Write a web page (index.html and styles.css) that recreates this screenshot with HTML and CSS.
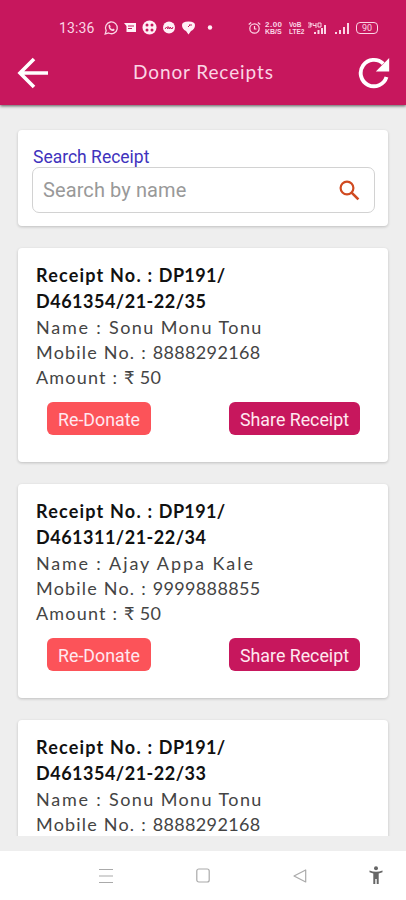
FILE: index.html
```
<!DOCTYPE html>
<html lang="en">
<head>
<meta charset="utf-8">
<title>Donor Receipts</title>
<link rel="stylesheet" href="styles.css">
</head>
<body>
<div class="app">
  <header class="header">
    <div class="status">
      <span class="clock">13:36</span>
      <svg class="left-icons" width="112" height="16" viewBox="0 0 112 16">
        <g fill="none" stroke="#fbd5e5" stroke-width="1.3"><path d="M1.2 14l1-3.4A5.9 5.9 0 1 1 4.6 13z"/></g>
        <path d="M4.6 5l1.2-.3.9 1.8-.6.8q.8 1.4 2.2 2l.8-.7 1.6.9q-.4 1.7-2.1 1.5Q5 10.200 4.600 6.400z" fill="#fbd5e5"/>
        <path d="M20 3h12v9H22.500V6z" fill="#fff0f6"/><path d="M24 6h6M24 8.500h4" stroke="#c7175d"/>
        <circle cx="45.500" cy="7.500" r="7" fill="#fff0f6"/>
        <g fill="#c7175d"><circle cx="43" cy="5" r="1.500"/><circle cx="48" cy="5" r="1.500"/><circle cx="43" cy="10" r="1.500"/><circle cx="48" cy="10" r="1.500"/></g>
        <circle cx="65" cy="7.500" r="6" fill="#fff0f6"/><path d="M61 9l1.500-2 1.500 2V6.500l2 2.500V7l2 2 1-2" fill="none" stroke="#c7175d"/>
        <path d="M78 5q0-3.500 6.500-3.500T91 5q0 4-4 6l-2.500 3.500L82 11q-4-2-4-6z" fill="#fff0f6"/><path d="M85 5h3M84 7l2-2" stroke="#c7175d"/>
        <circle cx="106" cy="7.500" r="2.200" fill="#fff0f6"/>
      </svg>
      <svg class="alarm" width="13" height="14" viewBox="0 0 13 14" fill="none" stroke="#fbd5e5" stroke-width="1.200"><circle cx="6.500" cy="7.500" r="4.700"/><path d="M.7 3.500l2.500-2M12.300 3.500l-2.500-2M6.500 5v3h2"/></svg>
      <span class="tiny speed"><span>2.00</span><span class="unit">KB/S</span></span>
      <span class="tiny wifi"><span>VoB</span><span>LTE2</span></span>
      <svg class="signals" width="45" height="14" viewBox="0 0 45 14" fill="#fbd5e5"><path d="M7 11h2v2H7zM10.500 9h2v4h-2zM14 7h2v6h-2zM17 4h2v9h-2zM28 11h2v2h-2zM32 9h2v4h-2zM36 6h2v7h-2zM40 2h2v11h-2z"/><path d="M1 2h3v2H1.500M4 2v4H1M6 2v2.500h3M9 2v5M11 2h3v4h-3z" fill="none" stroke="#fbd5e5"/></svg>
      <span class="battery">90</span>
    </div>
    <div class="toolbar">
      <svg class="back" width="32" height="32" viewBox="0 0 32 32" fill="none" stroke="#fff" stroke-width="3.600"><path d="M31 16H3M17 2L3 16l14 14"/></svg>
      <h1>Donor Receipts</h1>
      <svg class="reload" width="32" height="32" viewBox="0 0 32 32"><path d="M28.500 20A13.200 13.200 0 1 1 25.200 6.700" fill="none" stroke="#fff" stroke-width="3.900"/><path d="M31.200 1v13.400H17.800z" fill="#fff"/></svg>
    </div>
  </header>
  <main>
    <section class="card search">
      <label for="q">Search Receipt</label>
      <div class="field">
        <input id="q" placeholder="Search by name">
        <svg width="21" height="21" viewBox="0 0 21 21" fill="none" stroke="#d04a20"><circle cx="8" cy="8" r="6.400" stroke-width="2.200"/><path d="M12.600 12.600l6.800 6.800" stroke-width="2.600"/></svg>
      </div>
    </section>
    <article class="card receipt">
      <p class="strong"><span class="key">Receipt No. : </span>DP191/</p>
      <p class="strong code">D461354/21-22/35</p>
      <p><span class="key name">Name : </span><span class="person">Sonu Monu Tonu</span></p>
      <p><span class="key">Mobile No. : </span>8888292168</p>
      <p><span class="key">Amount : </span>₹ 50</p>
      <div class="actions"><button class="donate">Re-Donate</button><button class="share">Share Receipt</button></div>
    </article>
    <article class="card receipt">
      <p class="strong"><span class="key">Receipt No. : </span>DP191/</p>
      <p class="strong code">D461311/21-22/34</p>
      <p><span class="key name">Name : </span><span class="person wide">Ajay Appa Kale</span></p>
      <p><span class="key">Mobile No. : </span>9999888855</p>
      <p><span class="key">Amount : </span>₹ 50</p>
      <div class="actions"><button class="donate">Re-Donate</button><button class="share">Share Receipt</button></div>
    </article>
    <article class="card receipt clipped">
      <p class="strong"><span class="key">Receipt No. : </span>DP191/</p>
      <p class="strong code">D461354/21-22/33</p>
      <p><span class="key name">Name : </span><span class="person">Sonu Monu Tonu</span></p>
      <p><span class="key">Mobile No. : </span>8888292168</p>
    </article>
  </main>
  <nav>
    <svg class="menu" width="14" height="16" viewBox="0 0 14 16" stroke="#aaa" stroke-width="1.200"><path d="M0 1.500h14M0 8h14M0 14.500h14"/></svg>
    <svg class="home" width="14" height="15" viewBox="0 0 14 15" fill="none" stroke="#aaa" stroke-width="1.200"><rect x=".8" y="1" width="12.400" height="13" rx="2"/></svg>
    <svg class="prev" width="14" height="14" viewBox="0 0 14 14" fill="none" stroke="#aaa" stroke-width="1.200" stroke-linejoin="round"><path d="M12.700 1v12L1 7z"/></svg>
    <svg class="access" width="14" height="19" viewBox="0 0 14 19" fill="#666"><circle cx="7" cy="2.200" r="2"/><path d="M.5 4.500Q7 7 13.500 4.500v1.700L9.700 7.500V18H7.700v-5H6.300v5h-2V7.500L.5 6.200z"/></svg>
  </nav>
</div>
</body>
</html>
```
FILE: styles.css
```
* { box-sizing: border-box; }
body { margin: 0; background: #eee; font-family: Roboto, sans-serif; }
.app { width: 406px; height: 900px; display: flex; flex-direction: column; overflow: hidden; }
.header { height: 105px; flex: none; background: #c7175d; box-shadow: 0 1px 3px #555; color: #fbd5e5; }
.status { display: flex; align-items: center; height: 54px; padding: 2px 0 0 59px; }
.clock { width: 45px; font: 14px/16px Roboto, sans-serif; letter-spacing: .1px; }
.alarm { margin-left: 32px; }
.tiny { display: flex; flex-direction: column; font: 700 7px/7px "Liberation Sans", sans-serif; white-space: nowrap; }
.tiny span { height: 7px; overflow: hidden; }
.speed { width: 20px; margin-left: 4px; font-size: 8px; letter-spacing: .5px; }
.unit { font-size: 7px; letter-spacing: 0; }
.wifi { width: 16px; margin-left: 4px; font-size: 6.500px; }
.signals { margin-left: 2px; }
.battery { width: 22px; height: 12px; margin-left: 4px; border: 1.500px solid #fbd5e5; border-radius: 4px; font: 9px/10px Roboto, sans-serif; text-align: center; }
.toolbar { display: flex; align-items: center; height: 38px; padding: 0 16px 0 17px; }
.toolbar h1 { flex: 1; margin: -2px 0 0 84px; font: 400 19px/24px Lato, sans-serif; letter-spacing: .9px; white-space: nowrap; }
main { flex: none; height: 731px; padding: 25px 18px 0; overflow: hidden; display: flex; flex-direction: column; gap: 22px; }
.card { flex: none; background: #fff; border-radius: 4px; box-shadow: 0 1px 3px rgba(0, 0, 0, .2); }
.search { height: 96px; padding: 17px 14px 0; }
.search label { display: block; padding-left: 1px; font-size: 17.500px; line-height: 20px; color: #4033bd; }
.field { display: flex; align-items: center; width: 343px; height: 46px; padding: 0 14px 0 10px; border: 1.500px solid #d2d2d2; border-radius: 7px; }
.field input { flex: 1; min-width: 0; padding: 0; border: 0; outline: 0; background: none; font: 20px/24px Roboto, sans-serif; letter-spacing: .1px; }
.field input::placeholder { color: #999; opacity: 1; }
.receipt { height: 214px; padding: 14px 18px 0; }
.receipt p { margin: 0; font: 400 18px/25px Lato, sans-serif; letter-spacing: .35px; color: #444; white-space: nowrap; }
.receipt .strong { font-weight: 700; line-height: 26px; color: #111; }
.receipt .code { padding-bottom: 1px; letter-spacing: .5px; }
.key { letter-spacing: 1.200px; }
.name { letter-spacing: 1.800px; }
.person { letter-spacing: 1.400px; }
.wide { letter-spacing: 1.950px; }
.actions { display: flex; justify-content: space-between; padding: 12px 10px 0 11px; }
.actions button { height: 33px; padding: 2px 0 0; border: 0; border-radius: 6px; color: #ffe8f0; font: 17.800px/31px Roboto, sans-serif; }
.actions .donate { width: 104px; background: #fc5359; }
.actions .share { width: 131px; background: #c7175d; }
.clipped { border-radius: 4px 4px 0 0; }
nav { display: flex; align-items: center; height: 49px; margin-top: auto; padding: 0 23px 0 99px; background: #fff; }
.home { margin-left: 83px; }
.prev { margin-left: 83px; }
.access { margin-left: auto; }
```
